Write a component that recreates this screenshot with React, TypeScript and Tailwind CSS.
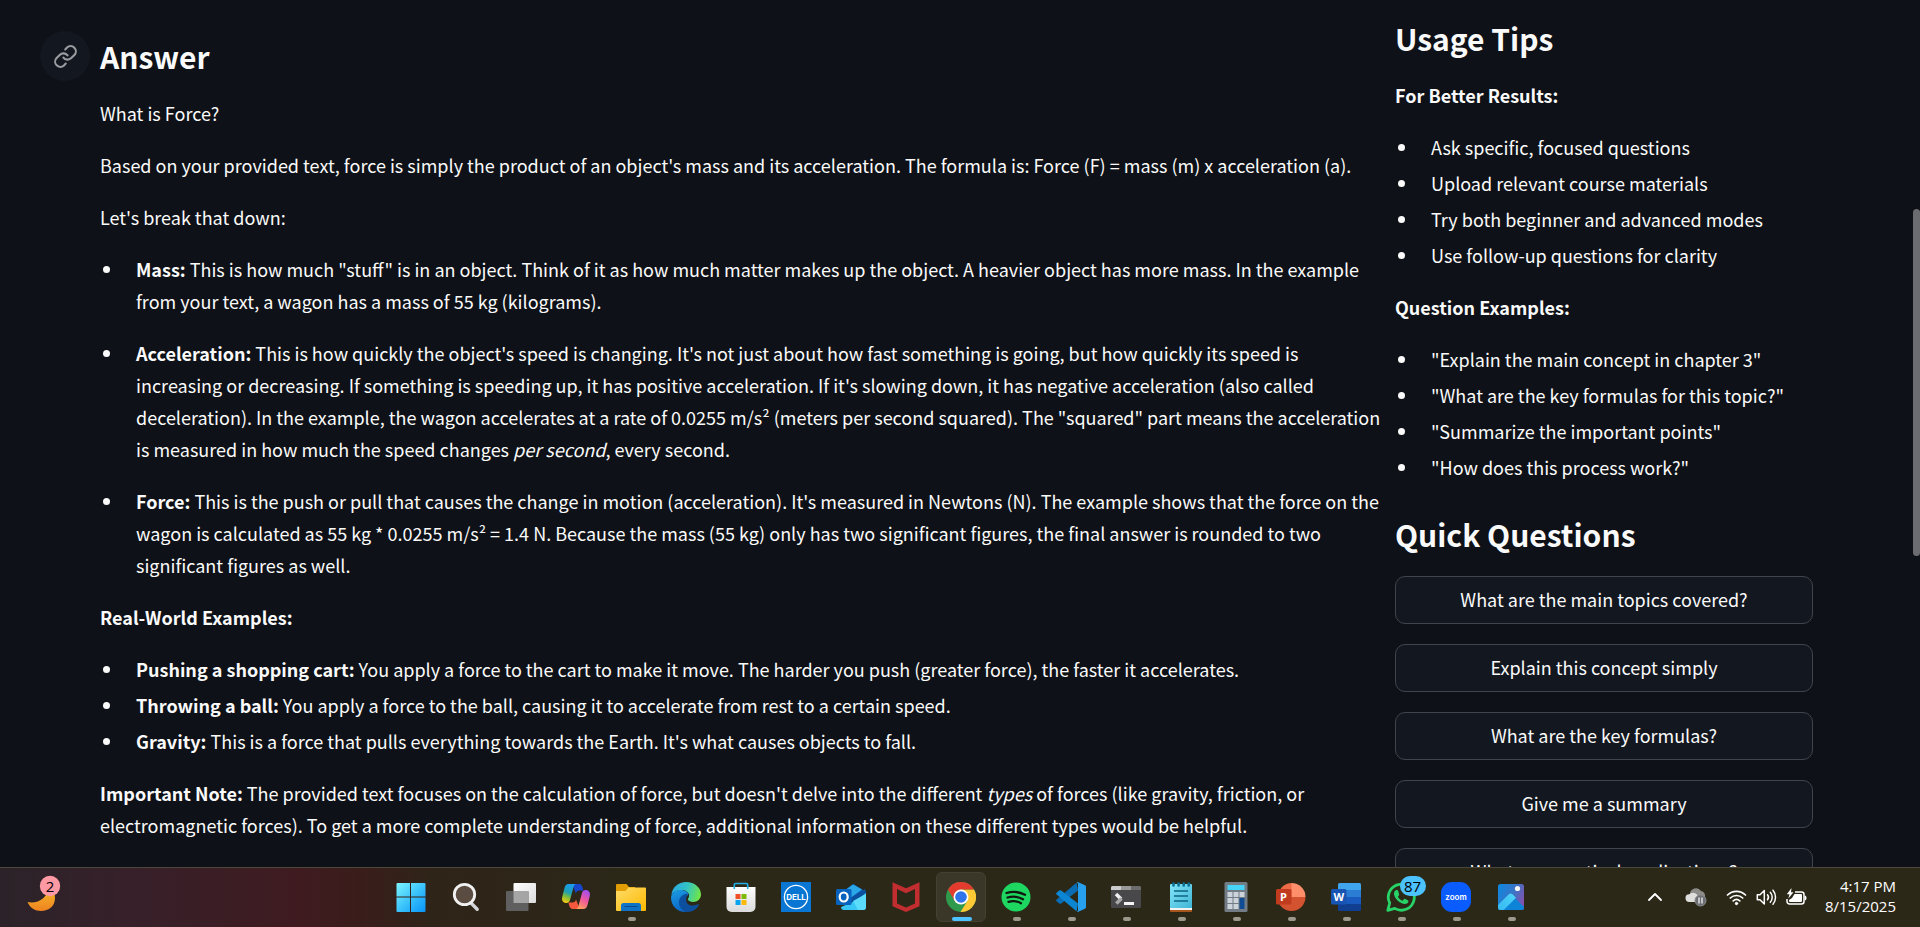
import type { ReactNode } from "react";

const Svg = ({ children }: { children: ReactNode }) => (
  <svg viewBox="0 0 30 30" className="size-[30px]" aria-hidden="true">
    {children}
  </svg>
);

const StartIcon = () => (
  <Svg>
    <defs>
      <linearGradient id="win" x1="0" y1="0" x2="1" y2="1">
        <stop offset="0" stopColor="#7df5ff" />
        <stop offset="0.5" stopColor="#3cc4fb" />
        <stop offset="1" stopColor="#0793f8" />
      </linearGradient>
    </defs>
    <path fill="url(#win)" d="M1.5 1H14v13.4H.5V2a1 1 0 0 1 1-1ZM15 1h13.500a1 1 0 0 1 1 1v12.400H15ZM.5 15.500H14V30H1.500a1 1 0 0 1-1-1ZM15 15.500h14.500V29a1 1 0 0 1-1 1H15Z" />
  </Svg>
);

const SearchIcon = () => (
  <Svg>
    <path d="m20 21 6.200 6.300" stroke="#d3d5d9" strokeWidth="3.400" strokeLinecap="round" />
    <circle cx="13.500" cy="12.500" r="10.200" fill="#5a4c41" stroke="#f1f1f2" strokeWidth="2.800" />
  </Svg>
);

const TaskViewIcon = () => (
  <Svg>
    <defs>
      <linearGradient id="tv" x1="0" y1="0" x2="1" y2="1">
        <stop offset="0" stopColor="#fff" />
        <stop offset="1" stopColor="#dcdcdc" />
      </linearGradient>
    </defs>
    <rect x="7.500" y="1" width="22.500" height="20" rx="1" fill="url(#tv)" />
    <rect x="0" y="9" width="22.500" height="20" rx="1" fill="#5f5f5f" />
    <path d="M7.500 9h15v12h-15Z" fill="#a5a5a5" />
  </Svg>
);

const CopilotIcon = () => (
  <Svg>
    <defs>
      <linearGradient id="cpa" x1="0.600" y1="0" x2="0.300" y2="1">
        <stop offset="0" stopColor="#1b9df0" />
        <stop offset="0.450" stopColor="#1d9fb4" />
        <stop offset="0.700" stopColor="#7ebd3c" />
        <stop offset="1" stopColor="#f6c810" />
      </linearGradient>
      <linearGradient id="cpb" x1="0.700" y1="0" x2="0.300" y2="1">
        <stop offset="0" stopColor="#a34df0" />
        <stop offset="0.500" stopColor="#f0589c" />
        <stop offset="1" stopColor="#ffa05c" />
      </linearGradient>
    </defs>
    <path d="M8 2h10c2.500 0 3 2 3.600 4l.8 2.500h-4c-2 0-3 1-3.500 3L12 4Z" fill="#1746cc" />
    <path d="M22 27H12c-2.500 0-3.400-2-4-4l-.5-2.500h4c2 0 3-1 3.500-3L18 25Z" fill="#f5583c" />
    <path d="M7.500 2h8c-2 0-2.500 1.500-3.200 4L9 18c-.6 2-1.500 3-3.500 3C2 21 .5 18.500 1.200 15L3.500 6c.8-2.600 1.800-4 4-4Z" fill="url(#cpa)" />
    <path d="M22.500 27h-8c2 0 2.500-1.500 3.200-4L21 11c.6-2 1.500-3 3.500-3 3.500 0 5 2.500 4.300 6l-2.300 9c-.8 2.600-1.800 4-4 4Z" fill="url(#cpb)" />
  </Svg>
);

const ExplorerIcon = () => (
  <Svg>
    <defs>
      <linearGradient id="fe" x1="0" y1="0" x2="1" y2="1">
        <stop offset="0" stopColor="#ffdc6a" />
        <stop offset="1" stopColor="#fcb900" />
      </linearGradient>
    </defs>
    <path d="M1 2h9.500L13 5h6v7H0V3a1 1 0 0 1 1-1Z" fill="#e09d05" />
    <path d="M0 9h9.500l3-3.500H29a1 1 0 0 1 1 1V28a1 1 0 0 1-1 1H1a1 1 0 0 1-1-1Z" fill="url(#fe)" />
    <path d="M5 29v-5.500A2.500 2.500 0 0 1 7.500 21h15a2.500 2.500 0 0 1 2.500 2.500V29Z" fill="#0f74c8" />
    <path d="M9 24.500h12" stroke="#0a4a85" strokeWidth="1.200" strokeLinecap="round" />
  </Svg>
);

const EdgeIcon = () => (
  <Svg>
    <defs>
      <linearGradient id="ea" x1="0" y1="0.300" x2="1" y2="0.500">
        <stop offset="0" stopColor="#2ba8e4" />
        <stop offset="0.500" stopColor="#33c3c6" />
        <stop offset="1" stopColor="#6fe646" />
      </linearGradient>
      <linearGradient id="eb" x1="0" y1="0" x2="0.300" y2="1">
        <stop offset="0" stopColor="#1b9de2" />
        <stop offset="1" stopColor="#0c68c8" />
      </linearGradient>
    </defs>
    <path d="M.3 13C1.500 5 7.500 0 15 0c8.500 0 15 5.500 15 12.500 0 4.500-3.500 7.500-8 7.500-3.500 0-5.500-1-5.500-2.500 0-1 1.500-1.500 1.500-4C18 10.500 15 8 11 8 6 8 1.500 10 .3 13Z" fill="url(#ea)" />
    <path d="M.1 15C.5 10.500 4.500 8 9.500 8c5 0 8.500 2.500 8.500 5.500-6 0-9 3-9 7.500 0 4 3 8 7 8.900C7 30.800-.5 24 .1 15Z" fill="url(#eb)" />
    <path d="M17 11.500C11 12 8 16 8 20c0 5.500 4 10 8.500 10 5 0 9.500-3.200 11.300-7 .3-.7-.3-1-.8-.7C19 26 11.500 21.500 17 11.500Z" fill="#0d4f9f" />
    <path d="M17.800 11.500c.5 1.200.3 2.900-.5 4.200-1.200 2 .8 4.300 4.900 4.300-5.200 1.500-8.700-2.500-4.400-8.500Z" fill="#2b2818" />
  </Svg>
);

const StoreIcon = () => (
  <Svg>
    <defs>
      <linearGradient id="st" x1="0" y1="0" x2="0" y2="1">
        <stop offset="0" stopColor="#fff" />
        <stop offset="1" stopColor="#dadada" />
      </linearGradient>
    </defs>
    <path d="M.5 5h29v20a5 5 0 0 1-5 5h-19a5 5 0 0 1-5-5Z" fill="url(#st)" />
    <path d="M8.300 7V2.700A1.200 1.200 0 0 1 9.500 1.500h11a1.200 1.200 0 0 1 1.200 1.200V7" fill="none" stroke="#23aee8" strokeWidth="1.600" />
    <path d="M9.500 12h5v5h-5Z" fill="#ef5028" />
    <path d="M15.500 12h5v5h-5Z" fill="#7fba08" />
    <path d="M9.500 18h5v5h-5Z" fill="#08a4ee" />
    <path d="M15.500 18h5v5h-5Z" fill="#fcb90a" />
  </Svg>
);

const DellIcon = () => (
  <Svg>
    <path d="M0 0h30v30H0Z" fill="#0876d2" />
    <circle cx="15" cy="15" r="11.600" fill="none" stroke="#fff" strokeWidth="1.300" />
    <text x="15" y="18" textAnchor="middle" fontFamily="Inter, sans-serif" fontWeight="700" fontSize="8" fill="#fff">DELL</text>
  </Svg>
);

const OutlookIcon = () => (
  <Svg>
    <path d="M6 10 16.500 2.500a2 2 0 0 1 2 0L30 10v10H6Z" fill="#0d5cb4" />
    <path d="m8 9 9-6.500 9 5L13 17l-5-2Z" fill="#2ba7e8" />
    <path d="m13 17 16-10 1 3v8l-10 6Z" fill="#0b4f9f" />
    <path d="M30 11v14a3 3 0 0 1-3 3H8a3 3 0 0 1-3-3l14-6Z" fill="#38c6f4" />
    <path d="M30 12v13a3 3 0 0 1-3 3h-5L17 19Z" fill="#5bdcfb" />
    <rect x="0" y="7" width="15.500" height="16" rx="1.500" fill="#0763be" />
    <ellipse cx="7.700" cy="15" rx="4" ry="4.500" fill="none" stroke="#fff" strokeWidth="2.200" />
  </Svg>
);

const McAfeeIcon = () => (
  <Svg>
    <path fill="#c22d30" fillRule="evenodd" d="m1.500.3 13.500 6 13.500-6v24L15 30 1.500 24.300ZM6 7v14.500l9 4 9-4V7l-9 4.200Z" />
  </Svg>
);

const ChromeIcon = () => (
  <Svg>
    <circle cx="15" cy="15" r="15" fill="#2f9a4c" />
    <path d="M15 7.500h13A15 15 0 0 1 14.500 30l7-11.200Z" fill="#fcc934" />
    <path d="M2 7.500a15 15 0 0 1 26 0H15l-6.500 11.200Z" fill="#e33b2e" />
    <circle cx="15" cy="15" r="7.500" fill="#fff" />
    <circle cx="15" cy="15" r="5.800" fill="#2f74ea" />
  </Svg>
);

const SpotifyIcon = () => (
  <Svg>
    <circle cx="15" cy="15" r="14.500" fill="#1ed760" />
    <path d="M5.500 11c6-1.800 13-1.200 18.500 1.800M6.500 15.500c5-1.400 11-.9 15.500 1.700M7.500 19.800c4.500-1.100 9-.6 12.500 1.400" fill="none" stroke="#10180f" strokeLinecap="round" strokeWidth="2.300" />
  </Svg>
);

const VsCodeIcon = () => (
  <Svg>
    <path d="m20.500.8 1.500 7.700L5.200 21.400a1.600 1.600 0 0 1-2 0L.6 19.300a1.200 1.200 0 0 1 0-1.800Z" fill="#0a6db3" />
    <path d="M20.500 29.200 22 21.500 5.200 8.600a1.600 1.600 0 0 0-2 0L.6 10.700a1.200 1.200 0 0 0 0 1.800Z" fill="#0c86d2" />
    <path d="M20.500.8A1.500 1.500 0 0 1 22.300.2l6.700 3a1.700 1.700 0 0 1 1 1.600v20.400a1.700 1.700 0 0 1-1 1.600l-6.700 3a1.500 1.500 0 0 1-1.800-.6c.8.500 1.500 0 1.500-1V2c0-1-.7-1.700-1.500-1.200Z" fill="#27a0f0" />
  </Svg>
);

const TerminalIcon = () => (
  <Svg>
    <rect x="0" y="4" width="30" height="22" rx="1.500" fill="#48484a" />
    <path d="M0 8V5.500A1.500 1.500 0 0 1 1.500 4H10v4Z" fill="#ccc" />
    <path d="M10 4h10v4H10Z" fill="#999" />
    <path d="M20 4h8.500A1.500 1.500 0 0 1 30 5.500V8H20Z" fill="#6c6c6c" />
    <path d="m5 12 5 5" stroke="#f0f0f0" strokeWidth="3.500" />
    <path d="m10.500 16.500-5.200 5" stroke="#a8a8a8" strokeWidth="3.500" />
    <path d="M13 20h10v3H13Z" fill="#f4f4f4" />
  </Svg>
);

const NotepadIcon = () => (
  <Svg>
    <defs>
      <linearGradient id="np" x1="0" y1="0" x2="1" y2="1">
        <stop offset="0" stopColor="#83e6f8" />
        <stop offset="1" stopColor="#40b4d6" />
      </linearGradient>
    </defs>
    <path d="M4 27h22v2a1 1 0 0 1-1 1H5a1 1 0 0 1-1-1Z" fill="#a8551c" />
    <path d="M4 25h22v3H4Z" fill="#f2f2f2" />
    <path d="M4 3a1 1 0 0 1 1-1h20a1 1 0 0 1 1 1v23H4Z" fill="url(#np)" />
    <path d="M7.500 1.500v2M12.600 1.500v2M17.700 1.500v2M22.700 1.500v2" stroke="#0d6f94" strokeLinecap="round" strokeWidth="2.600" />
    <path d="M8 9h14M8 14h14M8 19h14" stroke="#0d6584" strokeWidth="1.700" />
  </Svg>
);

const CalculatorIcon = () => (
  <Svg>
    <rect x="3.500" y="0" width="23" height="30" rx="1.500" fill="#737c85" />
    <path d="M6.500 3h17v5h-17Z" fill="#45d4f5" />
    <path d="M6.500 10h5v5h-5ZM12.500 10h5v5h-5ZM18.500 10h5v5h-5ZM6.500 16h5v5h-5ZM12.500 16h5v5h-5ZM6.500 22h5v5h-5ZM12.500 22h5v5h-5Z" fill="#cdd3da" />
    <path d="M18.500 16h5v11h-5Z" fill="#0f4c93" />
  </Svg>
);

const PowerPointIcon = () => (
  <Svg>
    <path d="M16 1a14 14 0 0 0-14 14l14 2Z" fill="#ed6c47" />
    <path d="M15.500 1A14 14 0 0 1 29.500 15l-7 2-7-2Z" fill="#ff8f6b" />
    <path d="M1.500 15h28a14 14 0 0 1-28 0Z" fill="#d35230" />
    <rect x="0" y="7" width="15.500" height="15.500" rx="1.500" fill="#c13b1e" />
    <text x="7.500" y="18.800" textAnchor="middle" fontFamily="Open Sans, sans-serif" fontWeight="700" fontSize="11" fill="#fff">P</text>
  </Svg>
);

const WordIcon = () => (
  <Svg>
    <path d="M7 8V2.500A1.500 1.500 0 0 1 8.500 1h20A1.500 1.500 0 0 1 30 2.500V8Z" fill="#41a5ee" />
    <path d="M7 8h23v7H7Z" fill="#2b7cd3" />
    <path d="M7 15h23v7H7Z" fill="#185abd" />
    <path d="M7 22h23v5.500a1.500 1.500 0 0 1-1.500 1.500h-20A1.500 1.500 0 0 1 7 27.500Z" fill="#103f91" />
    <rect x="0" y="7" width="15.500" height="15.500" rx="1.500" fill="#1854b4" />
    <text x="7.700" y="18.600" textAnchor="middle" fontFamily="Open Sans, sans-serif" fontWeight="700" fontSize="11" fill="#fff">W</text>
  </Svg>
);

const WhatsAppIcon = () => (
  <Svg>
    <path d="M1.800 28.300 3.700 21A13 13 0 1 1 8.800 26.400Z" fill="none" stroke="#27d366" strokeWidth="2.800" strokeLinejoin="round" />
    <path d="M10.500 8c-.8 0-2.500 1.300-2.500 3.700 0 4.700 6.500 10.300 10.800 10.300 2 0 3.700-1.300 3.700-3 0-.5-3.500-2.300-4-2.300-.6 0-1.400 2-2 2-1 0-4.500-3-4.500-4 0-.6 1.200-1.500 1.200-2C13.200 12 12 8 11.500 8Z" fill="#27d366" />
  </Svg>
);

const ZoomIcon = () => (
  <Svg>
    <rect x="0" y="0" width="30" height="30" rx="11" fill="#0b5cff" />
    <text x="15" y="17.500" textAnchor="middle" fontFamily="Inter, sans-serif" fontWeight="600" fontSize="8" fill="#fff">zoom</text>
  </Svg>
);

const PhotosIcon = () => (
  <Svg>
    <defs>
      <linearGradient id="pa" x1="0" y1="0.200" x2="1" y2="0.600">
        <stop offset="0" stopColor="#0f86dd" />
        <stop offset="0.600" stopColor="#3f72c4" />
        <stop offset="1" stopColor="#8052ae" />
      </linearGradient>
      <linearGradient id="pb" x1="0" y1="1" x2="1" y2="0">
        <stop offset="0" stopColor="#35b8f2" />
        <stop offset="1" stopColor="#4fd4f8" />
      </linearGradient>
    </defs>
    <rect x="2" y="2" width="26" height="26" rx="2.500" fill="url(#pa)" />
    <path d="m14 11.800 14 13v.700a2.500 2.500 0 0 1-2.500 2.500H6Z" fill="#0d84d8" />
    <path d="m2 23 10.500-10.500a3 3 0 0 1 4.200 0L20 15.700 7.700 28H4.500A2.500 2.500 0 0 1 2 25.500Z" fill="url(#pb)" />
    <circle cx="21.500" cy="6.500" r="2.600" fill="#f4f6fa" />
  </Svg>
);

type TaskApp = { name: string; icon: ReactNode; running?: boolean; active?: boolean; badge?: string };

const apps: TaskApp[] = [
  { name: "Start", icon: <StartIcon /> },
  { name: "Search", icon: <SearchIcon /> },
  { name: "Task View", icon: <TaskViewIcon /> },
  { name: "Copilot", icon: <CopilotIcon /> },
  { name: "File Explorer", icon: <ExplorerIcon />, running: true },
  { name: "Edge", icon: <EdgeIcon /> },
  { name: "Store", icon: <StoreIcon /> },
  { name: "Dell", icon: <DellIcon /> },
  { name: "Outlook", icon: <OutlookIcon /> },
  { name: "McAfee", icon: <McAfeeIcon /> },
  { name: "Chrome", icon: <ChromeIcon />, active: true },
  { name: "Spotify", icon: <SpotifyIcon />, running: true },
  { name: "Visual Studio Code", icon: <VsCodeIcon />, running: true },
  { name: "Terminal", icon: <TerminalIcon />, running: true },
  { name: "Notepad", icon: <NotepadIcon />, running: true },
  { name: "Calculator", icon: <CalculatorIcon />, running: true },
  { name: "PowerPoint", icon: <PowerPointIcon />, running: true },
  { name: "Word", icon: <WordIcon />, running: true },
  { name: "WhatsApp", icon: <WhatsAppIcon />, running: true, badge: "87" },
  { name: "Zoom", icon: <ZoomIcon />, running: true },
  { name: "Photos", icon: <PhotosIcon />, running: true },
];

const TaskButton = ({ app }: { app: TaskApp }) => (
  <button
    type="button"
    aria-label={app.name}
    className="relative flex h-full w-[55px] items-center justify-center"
  >
    <span
      className={
        app.active
          ? "flex size-[50px] items-center justify-center rounded-md border border-[#45402f] bg-[#3a3728]"
          : "flex size-[50px] items-center justify-center"
      }
    >
      {app.icon}
    </span>
    {app.running && <span className="absolute bottom-[5px] left-6 h-1 w-2 rounded-full bg-[#9d988c]" />}
    {app.active && <span className="absolute bottom-[5px] left-[18px] h-1 w-5 rounded-full bg-[#4cc2ff]" />}
    {app.badge && (
      <span className="absolute top-2 left-[26px] flex h-5 w-[26px] items-center justify-center rounded-full bg-[#4cc2ff] text-[15px] leading-5 text-black">
        {app.badge}
      </span>
    )}
  </button>
);

const Taskbar = () => (
  <footer className="grid h-[60px] shrink-0 grid-cols-[1fr_auto_1fr] items-stretch border-t border-[#4b473b] bg-[linear-gradient(90deg,#2b2329_0px,#37202a_130px,#3f1b20_300px,#3a1d1b_360px,#2f2418_430px,#2b2818_640px)] pb-px pl-0.5 font-[family-name:'Open_Sans','Noto_Sans',sans-serif] text-white">
    <button type="button" aria-label="Weather" className="relative ml-[18px] w-12">
      <svg viewBox="0 0 48 58" className="h-full w-12" aria-hidden="true">
        <defs>
          <linearGradient id="moon" x1="0" y1="0" x2="0" y2="1">
            <stop offset="0" stopColor="#f8c22c" />
            <stop offset="1" stopColor="#ee8220" />
          </linearGradient>
        </defs>
        <path d="M30 17c3 4 5 8 5 13 0 8-6 13-14 13-6 0-11-3-13.500-9 10 2 20-3 22.500-17Z" fill="url(#moon)" />
        <circle cx="30" cy="18" r="10.200" fill="#ff99a4" />
      </svg>
      <span className="absolute top-2 left-5 flex size-5 items-center justify-center text-[15px] leading-5 text-black">
        2
      </span>
    </button>
    <div className="flex">
      {apps.map((app) => (
        <TaskButton key={app.name} app={app} />
      ))}
    </div>
    <div className="flex items-center justify-end pr-6">
      <button type="button" aria-label="Show hidden icons" className="mr-[22px]">
        <svg viewBox="0 0 16 10" className="h-2.5 w-4" fill="none" stroke="#fff" strokeWidth="1.800" strokeLinecap="round" strokeLinejoin="round">
          <path d="m2 8 6-6 6 6" />
        </svg>
      </button>
      <button type="button" aria-label="OneDrive" className="mr-[19px]">
        <svg viewBox="0 0 22 20" className="h-5 w-[22px]">
          <path d="M5 7.500a6 6 0 0 1 11-3.500 5 5 0 0 1 2 9H8Z" fill="#8d8c89" />
          <path d="M4.500 15a3.800 3.800 0 0 1-.3-7.700A5.200 5.200 0 0 1 12 7.500l4 7.500Z" fill="#dededc" />
          <circle cx="15.500" cy="13.500" r="5.500" fill="#6d6e72" stroke="#8a8b8f" />
          <path d="M14 10.500v6M17 10.500v6" stroke="#fff" strokeWidth="1.200" />
        </svg>
      </button>
      <button type="button" aria-label="Network, volume and battery" className="mr-[18px] flex items-center gap-[9px]">
        <svg viewBox="0 0 21 18" className="h-[18px] w-[21px]" fill="none" stroke="#fff" strokeWidth="1.700" strokeLinecap="round">
          <path d="M1.500 7a13 13 0 0 1 18 0M4.300 10a9 9 0 0 1 12.400 0M7.200 12.900a5 5 0 0 1 6.600 0" />
          <circle cx="10.500" cy="15.500" r="1.200" fill="#fff" strokeWidth="1" />
        </svg>
        <svg viewBox="0 0 21 18" className="h-[18px] w-[21px]" fill="none" stroke="#fff" strokeWidth="1.500" strokeLinecap="round" strokeLinejoin="round">
          <path d="M1.300 6.800H4l4.300-4.300V16L4 11.700H1.300ZM11.500 6.800a4 4 0 0 1 0 5M14.300 4.300a7.500 7.500 0 0 1 0 10M17 2.200a11 11 0 0 1 0 14" />
        </svg>
        <svg viewBox="0 0 21 18" className="h-[18px] w-[21px]">
          <path d="M9 4h6.500A2.500 2.500 0 0 1 18 6.500v7a2.500 2.500 0 0 1-2.500 2.500h-12A2.500 2.500 0 0 1 1 13.500V11" fill="none" stroke="#fff" strokeWidth="1.500" />
          <path d="M8.500 6H15a1 1 0 0 1 1 1v6a1 1 0 0 1-1 1H4a1 1 0 0 1-1-1v-1l3-2ZM18.700 7.500c2.400 0 2.400 5 0 5Z" fill="#fff" />
          <path d="M5.500 0 .8 6.200h2.700L2.300 10.500l5.200-6.200H5Z" fill="#fff" />
        </svg>
      </button>
      <button type="button" className="pb-0.5 text-right text-[15px] leading-5">
        <time className="block">4:17 PM</time>
        <time className="block">8/15/2025</time>
      </button>
    </div>
  </footer>
);

const Heading = ({ children }: { children: ReactNode }) => (
  <h3 className="text-[30px] leading-[42px] font-semibold">{children}</h3>
);

const List = ({ children }: { children: ReactNode }) => (
  <ul className="flex list-disc flex-col gap-1 pl-6">{children}</ul>
);

const Item = ({ children }: { children: ReactNode }) => <li className="pl-3">{children}</li>;

const tips = [
  "Ask specific, focused questions",
  "Upload relevant course materials",
  "Try both beginner and advanced modes",
  "Use follow-up questions for clarity",
];

const examples = [
  '"Explain the main concept in chapter 3"',
  '"What are the key formulas for this topic?"',
  '"Summarize the important points"',
  '"How does this process work?"',
];

const quickQuestions = [
  "What are the main topics covered?",
  "Explain this concept simply",
  "What are the key formulas?",
  "Give me a summary",
  "What are practical applications?",
];

const Answer = () => (
  <article className="flex flex-col gap-5 pt-[35px]">
    <div className="-ml-[60px] flex items-center gap-2.5">
      <a
        href="#answer"
        aria-label="Link to Answer"
        className="-my-1 flex size-[50px] items-center justify-center rounded-full bg-[#131720] text-[#9b9ca0]"
      >
        <svg viewBox="0 0 24 24" className="size-[25px]" fill="none" stroke="currentColor" strokeWidth="2" strokeLinecap="round" strokeLinejoin="round">
          <path d="M10 13a5 5 0 0 0 7.540.540l3-3a5 5 0 0 0-7.070-7.070l-1.720 1.710" />
          <path d="M14 11a5 5 0 0 0-7.540-.540l-3 3a5 5 0 0 0 7.070 7.070l1.710-1.710" />
        </svg>
      </a>
      <Heading>Answer</Heading>
    </div>
    <p>What is Force?</p>
    <p>
      Based on your provided text, force is simply the product of an object's mass and its acceleration. The formula is:
      Force (F) = mass (m) x acceleration (a).
    </p>
    <p>Let's break that down:</p>
    <ul className="flex list-disc flex-col gap-5 pl-6">
      <Item>
        <strong className="font-semibold">Mass:</strong> This is how much "stuff" is in an object. Think of it as how
        much matter makes up the object. A heavier object has more mass. In the example from your text, a wagon has a
        mass of 55 kg (kilograms).
      </Item>
      <Item>
        <strong className="font-semibold">Acceleration:</strong> This is how quickly the object's speed is changing.
        It's not just about how fast something is going, but how quickly its speed is increasing or decreasing. If
        something is speeding up, it has positive acceleration. If it's slowing down, it has negative acceleration
        (also called deceleration). In the example, the wagon accelerates at a rate of 0.0255 m/s² (meters per second
        squared). The "squared" part means the acceleration is measured in how much the speed changes{" "}
        <em>per second</em>, every second.
      </Item>
      <Item>
        <strong className="font-semibold">Force:</strong> This is the push or pull that causes the change in motion
        (acceleration). It's measured in Newtons (N). The example shows that the force on the wagon is calculated as 55
        kg * 0.0255 m/s² = 1.4 N. Because the mass (55 kg) only has two significant figures, the final answer is
        rounded to two significant figures as well.
      </Item>
    </ul>
    <p className="font-semibold">Real-World Examples:</p>
    <List>
      <Item>
        <strong className="font-semibold">Pushing a shopping cart:</strong> You apply a force to the cart to make it
        move. The harder you push (greater force), the faster it accelerates.
      </Item>
      <Item>
        <strong className="font-semibold">Throwing a ball:</strong> You apply a force to the ball, causing it to
        accelerate from rest to a certain speed.
      </Item>
      <Item>
        <strong className="font-semibold">Gravity:</strong> This is a force that pulls everything towards the Earth.
        It's what causes objects to fall.
      </Item>
    </List>
    <p>
      <strong className="font-semibold">Important Note:</strong> The provided text focuses on the calculation of force,
      but doesn't delve into the different <em>types</em> of forces (like gravity, friction, or electromagnetic
      forces). To get a more complete understanding of force, additional information on these different types would be
      helpful.
    </p>
  </article>
);

const Sidebar = () => (
  <aside className="flex flex-col gap-5 pt-[17px]">
    <Heading>Usage Tips</Heading>
    <p className="font-semibold">For Better Results:</p>
    <List>
      {tips.map((tip) => (
        <Item key={tip}>{tip}</Item>
      ))}
    </List>
    <p className="font-semibold">Question Examples:</p>
    <List>
      {examples.map((example) => (
        <Item key={example}>{example}</Item>
      ))}
    </List>
    <section className="flex flex-col gap-[21px] pt-2.5">
      <Heading>Quick Questions</Heading>
      <div className="flex flex-col gap-5">
        {quickQuestions.map((question) => (
          <button
            key={question}
            type="button"
            className="h-12 w-full rounded-[10px] border border-[#41444c] bg-[#131720] pb-0.5"
          >
            {question}
          </button>
        ))}
      </div>
    </section>
  </aside>
);

export default function App() {
  return (
    <div className="flex h-screen flex-col overflow-hidden bg-[#0e1117] text-[#fafafa]">
      <main className="relative min-h-0 flex-1 overflow-hidden font-[family-name:'Noto_Sans_CJK_SC',sans-serif] text-[18px] leading-8">
        <div className="grid grid-cols-[minmax(0,1fr)_418px] gap-2.5 pr-[107px] pl-[100px]">
          <Answer />
          <Sidebar />
        </div>
        <div className="absolute top-[209px] right-0 h-[347px] w-[7px] rounded-full bg-[#6b6c70]" />
      </main>
      <Taskbar />
    </div>
  );
}
